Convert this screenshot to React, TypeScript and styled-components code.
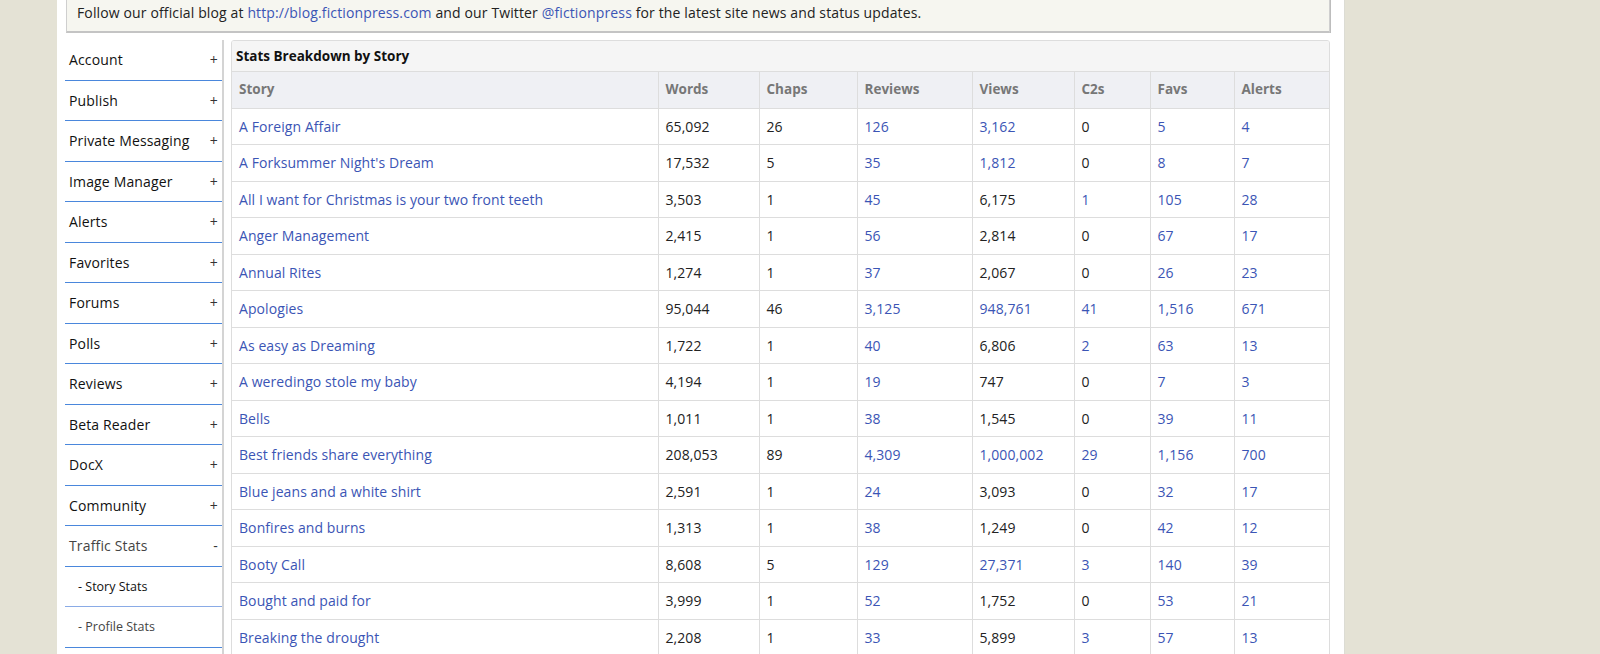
import styled, { createGlobalStyle } from 'styled-components';

const GlobalStyle = createGlobalStyle`
  html, body {
    margin: 0;
    padding: 0;
    overflow: hidden;
    background: #e4e2d5;
    font-family: 'Open Sans', 'Liberation Sans', sans-serif;
    color: #333333;
  }
`;

type Story = {
  title: string;
  words: string;
  chaps: number;
  reviews: string;
  views: string;
  c2s: number;
  favs: string;
  alerts: string;
};

const stories: Story[] = [
  { title: 'A Foreign Affair', words: '65,092', chaps: 26, reviews: '126', views: '3,162', c2s: 0, favs: '5', alerts: '4' },
  { title: "A Forksummer Night's Dream", words: '17,532', chaps: 5, reviews: '35', views: '1,812', c2s: 0, favs: '8', alerts: '7' },
  { title: 'All I want for Christmas is your two front teeth', words: '3,503', chaps: 1, reviews: '45', views: '6,175', c2s: 1, favs: '105', alerts: '28' },
  { title: 'Anger Management', words: '2,415', chaps: 1, reviews: '56', views: '2,814', c2s: 0, favs: '67', alerts: '17' },
  { title: 'Annual Rites', words: '1,274', chaps: 1, reviews: '37', views: '2,067', c2s: 0, favs: '26', alerts: '23' },
  { title: 'Apologies', words: '95,044', chaps: 46, reviews: '3,125', views: '948,761', c2s: 41, favs: '1,516', alerts: '671' },
  { title: 'As easy as Dreaming', words: '1,722', chaps: 1, reviews: '40', views: '6,806', c2s: 2, favs: '63', alerts: '13' },
  { title: 'A weredingo stole my baby', words: '4,194', chaps: 1, reviews: '19', views: '747', c2s: 0, favs: '7', alerts: '3' },
  { title: 'Bells', words: '1,011', chaps: 1, reviews: '38', views: '1,545', c2s: 0, favs: '39', alerts: '11' },
  { title: 'Best friends share everything', words: '208,053', chaps: 89, reviews: '4,309', views: '1,000,002', c2s: 29, favs: '1,156', alerts: '700' },
  { title: 'Blue jeans and a white shirt', words: '2,591', chaps: 1, reviews: '24', views: '3,093', c2s: 0, favs: '32', alerts: '17' },
  { title: 'Bonfires and burns', words: '1,313', chaps: 1, reviews: '38', views: '1,249', c2s: 0, favs: '42', alerts: '12' },
  { title: 'Booty Call', words: '8,608', chaps: 5, reviews: '129', views: '27,371', c2s: 3, favs: '140', alerts: '39' },
  { title: 'Bought and paid for', words: '3,999', chaps: 1, reviews: '52', views: '1,752', c2s: 0, favs: '53', alerts: '21' },
  { title: 'Breaking the drought', words: '2,208', chaps: 1, reviews: '33', views: '5,899', c2s: 3, favs: '57', alerts: '13' },
];

const menu = [
  { label: 'Account', sign: '+' },
  { label: 'Publish', sign: '+' },
  { label: 'Private Messaging', sign: '+' },
  { label: 'Image Manager', sign: '+' },
  { label: 'Alerts', sign: '+' },
  { label: 'Favorites', sign: '+' },
  { label: 'Forums', sign: '+' },
  { label: 'Polls', sign: '+' },
  { label: 'Reviews', sign: '+' },
  { label: 'Beta Reader', sign: '+' },
  { label: 'DocX', sign: '+' },
  { label: 'Community', sign: '+' },
  { label: 'Traffic Stats', sign: '-', open: true },
];

const subMenu = ['Story Stats', 'Profile Stats'];

const columns = [
  { label: 'Story', width: 426 },
  { label: 'Words', width: 101 },
  { label: 'Chaps', width: 98 },
  { label: 'Reviews', width: 115 },
  { label: 'Views', width: 102 },
  { label: 'C2s', width: 76 },
  { label: 'Favs', width: 84 },
  { label: 'Alerts', width: 96 },
];

export default function App() {
  return (
    <>
      <GlobalStyle />
      <Page>
        <Notice>
          Follow our official blog at <A href="#">http://blog.fictionpress.com</A> and our
          Twitter <A href="#">@fictionpress</A> for the latest site news and status updates.
        </Notice>
        <Main>
          <Sidebar>
            {menu.map((m) => (
              <MenuItem key={m.label} $open={m.open}>
                <span>{m.label}</span>
                <Sign>{m.sign}</Sign>
              </MenuItem>
            ))}
            {subMenu.map((s, i) => (
              <SubItem key={s} $muted={i === 1}>
                - {s}
              </SubItem>
            ))}
            <MenuItem>
              <span>&nbsp;</span>
            </MenuItem>
          </Sidebar>
          <Panel>
            <PanelTitle>Stats Breakdown by Story</PanelTitle>
            <Table>
              <colgroup>
                {columns.map((c) => (
                  <col key={c.label} style={{ width: c.width }} />
                ))}
              </colgroup>
              <thead>
                <tr>
                  {columns.map((c) => (
                    <Th key={c.label}>{c.label}</Th>
                  ))}
                </tr>
              </thead>
              <tbody>
                {stories.map((s) => (
                  <tr key={s.title}>
                    <Td><A href="#">{s.title}</A></Td>
                    <Td>{s.words}</Td>
                    <Td>{s.chaps}</Td>
                    <Td><A href="#">{s.reviews}</A></Td>
                    <Td>{s.chaps > 1 ? <A href="#">{s.views}</A> : s.views}</Td>
                    <Td>{s.c2s > 0 ? <A href="#">{s.c2s}</A> : s.c2s}</Td>
                    <Td><A href="#">{s.favs}</A></Td>
                    <Td><A href="#">{s.alerts}</A></Td>
                  </tr>
                ))}
              </tbody>
            </Table>
          </Panel>
        </Main>
      </Page>
    </>
  );
}

const Page = styled.div`
  width: 1288px;
  min-height: 100vh;
  margin-left: 57px;
  padding: 0 14px 0 8px;
  box-sizing: border-box;
  background: #ffffff;
  border-right: 1px solid #dcdcd4;
`;

const A = styled.a`
  color: #3b55b5;
  text-decoration: none;
`;

const Notice = styled.div`
  margin-left: 1px;
  padding: 3px 10px 8px;
  font-size: 14px;
  line-height: 20px;
  letter-spacing: 0.13px;
  color: #222222;
  background: #f6f6f0;
  border: 1px solid #cfcfcf;
  border-top: none;
  border-bottom: 2px solid #c4c4c4;
  box-shadow: 1px 0 0 #bdbdbd;
`;

const Main = styled.div`
  display: flex;
  align-items: flex-start;
  gap: 7px;
  margin-top: 7px;
`;

const Sidebar = styled.nav`
  width: 157px;
  flex-shrink: 0;
  border-right: 2px solid #d4d4d4;
`;

const MenuItem = styled.div<{ $open?: boolean }>`
  display: flex;
  justify-content: space-between;
  align-items: center;
  padding: 10px 4px 10px 4px;
  font-size: 14px;
  line-height: 19.5px;
  letter-spacing: 0.15px;
  color: ${(p) => (p.$open ? '#444444' : '#111111')};
  border-bottom: 1px solid #4a87dc;
`;

const Sign = styled.span`
  font-size: 14px;
  color: #333333;
`;

const SubItem = styled.div<{ $muted?: boolean }>`
  padding: 10px 6px 10px 13px;
  font-size: 12.5px;
  line-height: 19.5px;
  color: ${(p) => (p.$muted ? '#444444' : '#111111')};
  border-bottom: 1px solid ${(p) => (p.$muted ? '#4a87dc' : '#8aabe6')};
`;

const Panel = styled.section`
  flex: 1;
  border: 1px solid #dddddd;
  border-radius: 3px 3px 0 0;
  overflow: hidden;
`;

const PanelTitle = styled.div`
  padding: 5px 4px;
  font-size: 13.5px;
  font-weight: 700;
  line-height: 20px;
  color: #111111;
  background: #f5f5f5;
  border-bottom: 1px solid #dddddd;
`;

const Table = styled.table`
  width: 100%;
  border-collapse: collapse;
  table-layout: fixed;
  font-size: 14px;
`;

const Th = styled.th`
  padding: 8px 7px;
  text-align: left;
  font-weight: 700;
  font-size: 13.5px;
  line-height: 19.5px;
  color: #777777;
  background: #eff0f4;
  border-left: 1px solid #dddddd;
  border-bottom: 1px solid #dddddd;
  &:first-child {
    border-left: none;
  }
`;

const Td = styled.td`
  padding: 8px 7px;
  line-height: 19.5px;
  letter-spacing: 0.08px;
  color: #222222;
  border-left: 1px solid #dddddd;
  border-bottom: 1px solid #dddddd;
  white-space: nowrap;
  &:first-child {
    border-left: none;
  }
`;
